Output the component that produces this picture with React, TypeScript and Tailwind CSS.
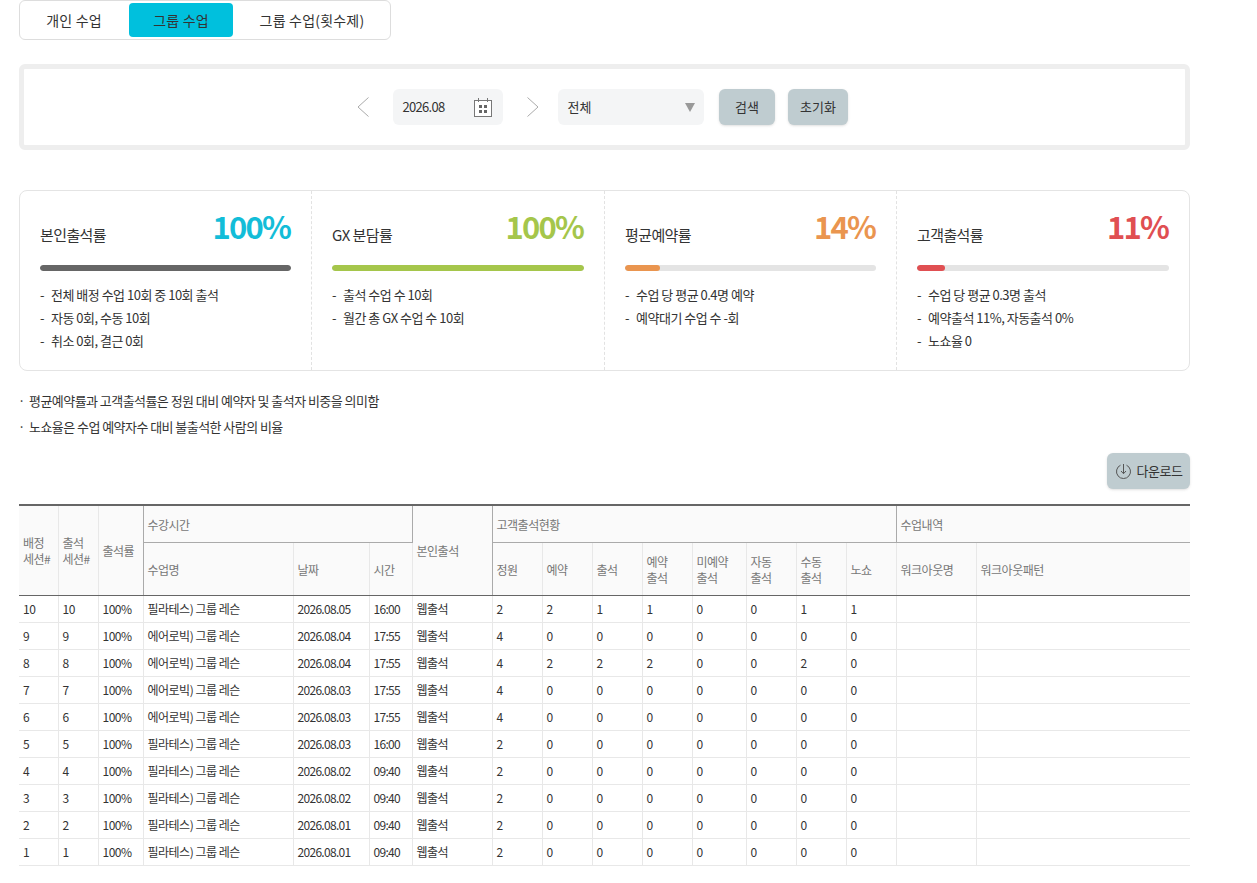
type Stat = {
    title: string,
    value: string,
    percent: number,
    textClass: string,
    barClass: string,
    lines: string[],
}

const stats: Stat[] = [
    { title: "본인출석률", value: "100%", percent: 100, textClass: "text-[#13bdd8]", barClass: "bg-[#666666]", lines: ["전체 배정 수업 10회 중 10회 출석", "자동 0회, 수동 10회", "취소 0회, 결근 0회"] },
    { title: "GX 분담률", value: "100%", percent: 100, textClass: "text-[#a5c64b]", barClass: "bg-[#a5c64b]", lines: ["출석 수업 수 10회", "월간 총 GX 수업 수 10회"] },
    { title: "평균예약률", value: "14%", percent: 14, textClass: "text-[#ea954f]", barClass: "bg-[#ea954f]", lines: ["수업 당 평균 0.4명 예약", "예약대기 수업 수 -회"] },
    { title: "고객출석률", value: "11%", percent: 11, textClass: "text-[#e04f52]", barClass: "bg-[#e04f52]", lines: ["수업 당 평균 0.3명 출석", "예약출석 11%, 자동출석 0%", "노쇼율 0"] },
];

const PILATES = "필라테스) 그룹 레슨";
const AEROBIC = "에어로빅) 그룹 레슨";

const rows = [
    { n: 10, name: PILATES, date: "2026.08.05", time: "16:00", c: [2, 2, 1, 1, 0, 0, 1, 1] },
    { n: 9, name: AEROBIC, date: "2026.08.04", time: "17:55", c: [4, 0, 0, 0, 0, 0, 0, 0] },
    { n: 8, name: AEROBIC, date: "2026.08.04", time: "17:55", c: [4, 2, 2, 2, 0, 0, 2, 0] },
    { n: 7, name: AEROBIC, date: "2026.08.03", time: "17:55", c: [4, 0, 0, 0, 0, 0, 0, 0] },
    { n: 6, name: AEROBIC, date: "2026.08.03", time: "17:55", c: [4, 0, 0, 0, 0, 0, 0, 0] },
    { n: 5, name: PILATES, date: "2026.08.03", time: "16:00", c: [2, 0, 0, 0, 0, 0, 0, 0] },
    { n: 4, name: PILATES, date: "2026.08.02", time: "09:40", c: [2, 0, 0, 0, 0, 0, 0, 0] },
    { n: 3, name: PILATES, date: "2026.08.02", time: "09:40", c: [2, 0, 0, 0, 0, 0, 0, 0] },
    { n: 2, name: PILATES, date: "2026.08.01", time: "09:40", c: [2, 0, 0, 0, 0, 0, 0, 0] },
    { n: 1, name: PILATES, date: "2026.08.01", time: "09:40", c: [2, 0, 0, 0, 0, 0, 0, 0] },
];

const colWidths = [39, 40, 45, 150, 76, 43, 80, 50, 50, 50, 50, 54, 50, 50, 50, 80, 214];

const thMain = "border-r border-b border-[#aaaaaa] px-1 pt-[2px] text-left text-[12px] font-normal leading-[16px] tracking-[-0.5px] text-[#777777] align-middle";
const thSub = "border-r border-b border-r-[#e8e8e8] border-b-[#666666] px-1 pt-[2px] text-left text-[12px] font-normal leading-[16px] tracking-[-0.5px] text-[#777777] align-middle";
const td = "h-[27px] border-r border-b border-[#e8e8e8] pl-1 text-[12px] leading-[16px] text-[#333333] whitespace-nowrap tracking-[-0.5px] align-middle";

function CalendarIcon(): JSX.Element {
    return (
        <svg width="18" height="19" viewBox="0 0 18 19" fill="none">
            <rect x="0.5" y="2.5" width="17" height="16" fill="#fff" stroke="#777" />
            <path d="M4.5 0v4M13.5 0v4" stroke="#777" />
            <path d="M5 7h3v3H5zM10 7h3v3h-3zM5 12h3v3H5zM10 12h3v3h-3z" fill="#666" />
        </svg>
    );
}

function Arrow({ flip }: { flip?: boolean }): JSX.Element {
    return (
        <svg width="12" height="20" viewBox="0 0 12 20" fill="none" stroke="#aaaaaa" strokeWidth="1" className={flip ? "rotate-180" : ""}>
            <path d="M11.5 0.5L1 10l10.5 9.5" />
        </svg>
    );
}

function StatCard({ stat }: { stat: Stat }): JSX.Element {
    return (
        <div className="px-[20px] border-r border-dashed border-[#e2e2e2] last:border-r-0">
            <div className="flex items-end justify-between h-[64px]">
                <span className="text-[15px] leading-[22px] mb-[9px] tracking-[-0.6px] text-[#333333]">{stat.title}</span>
                <span className={`text-[31px] font-bold leading-[44px] mb-[7px] pr-[1px] tracking-[-1.8px] ${stat.textClass}`}>{stat.value}</span>
            </div>
            <div className="mt-[10px] h-[6px] rounded-full bg-[#e4e4e4] overflow-hidden">
                <div className={`h-full rounded-full ${stat.barClass}`} style={{ width: `${stat.percent}%` }} />
            </div>
            <ul className="mt-[12px]">
                {stat.lines.map((line) => (
                    <li key={line} className="flex h-[23px] items-center text-[13px] tracking-[-0.5px] text-[#333333]">
                        <span className="w-[11px]">-</span>
                        {line}
                    </li>
                ))}
            </ul>
        </div>
    );
}

export default function App(): JSX.Element {
    return (
        <div className="w-[1257px] h-[883px] overflow-hidden bg-white pl-[19px] font-['Noto_Sans_CJK_KR','Noto_Sans',sans-serif]">
            <div className="w-[1171px]">
                <div className="flex w-[372px] h-[40px] items-center rounded-[6px] border border-[#dddddd] px-[2px] text-[14px] tracking-[0.2px] text-[#333333]">
                    <button className="w-[107px] h-[34px] pr-[3px]">개인 수업</button>
                    <button className="w-[104px] h-[34px] rounded-[4px] bg-[#00c0dd]">그룹 수업</button>
                    <button className="flex-1 h-[34px] pl-[3px]">그룹 수업(횟수제)</button>
                </div>

                <div className="mt-[24px] flex h-[86px] items-center justify-center rounded-[6px] border-[5px] border-[#eeeeee] text-[13px] text-[#333333] pr-[5px]">
                    <Arrow />
                    <div className="ml-[24px] flex w-[110px] h-[36px] items-center justify-between rounded-[6px] bg-[#f4f5f6] pl-[10px] pr-[11px] tracking-[-0.7px]">
                        <span>2026.08</span>
                        <CalendarIcon />
                    </div>
                    <div className="ml-[24px]"><Arrow flip /></div>
                    <div className="ml-[19px] flex w-[146px] h-[36px] items-center justify-between rounded-[6px] bg-[#f4f5f6] pl-[10px] pr-[9px]">
                        <span>전체</span>
                        <span className="w-0 h-0 border-x-[5px] border-t-[9px] border-x-transparent border-t-[#999999]" />
                    </div>
                    <button className="ml-[15px] w-[56px] h-[36px] pl-[1px] rounded-[6px] bg-[#bfccd0] shadow-sm">검색</button>
                    <button className="ml-[13px] w-[60px] h-[36px] pl-[1px] rounded-[6px] bg-[#bfccd0] shadow-sm">초기화</button>
                </div>

                <div className="mt-[40px] grid grid-cols-[292px_293px_292px_1fr] h-[181px] rounded-[8px] border border-[#e4e4e4]">
                    {stats.map((stat) => (
                        <StatCard key={stat.title} stat={stat} />
                    ))}
                </div>

                <div className="mt-[17px] text-[13px] tracking-[-0.55px] text-[#333333]">
                    <p className="flex h-[26px] items-center"><span className="w-[11px] -ml-[1px]">·</span>평균예약률과 고객출석률은 정원 대비 예약자 및 출석자 비중을 의미함</p>
                    <p className="flex h-[26px] items-center"><span className="w-[11px] -ml-[1px]">·</span>노쇼율은 수업 예약자수 대비 불출석한 사람의 비율</p>
                </div>

                <div className="mt-[13px] flex justify-end">
                    <button className="flex w-[83px] h-[36px] items-center justify-center gap-[5px] rounded-[6px] bg-[#bfccd0] shadow-sm text-[13px] text-[#333333] tracking-[-0.5px]">
                        <svg width="17" height="17" viewBox="0 0 17 17" fill="none" stroke="#555" strokeWidth="1">
                            <path d="M5.5 2.2a7 7 0 1 0 6 0" />
                            <path d="M8.5 1v9.5M6 8l2.5 2.7L11 8" />
                        </svg>
                        다운로드
                    </button>
                </div>

                <table className="mt-[15px] w-[1171px] table-fixed border-collapse border-t-2 border-t-[#666666] bg-white">
                    <colgroup>
                        {colWidths.map((w, i) => (
                            <col key={i} style={{ width: w }} />
                        ))}
                    </colgroup>
                    <thead className="bg-[#fafafa]">
                        <tr className="h-[37px]">
                            <th rowSpan={2} className={`${thMain} border-r-[#e8e8e8] border-b-[#666666]`}>배정<br />세션#</th>
                            <th rowSpan={2} className={`${thMain} border-r-[#e8e8e8] border-b-[#666666]`}>출석<br />세션#</th>
                            <th rowSpan={2} className={`${thMain} border-b-[#666666]`}>출석률</th>
                            <th colSpan={3} className={thMain}>수강시간</th>
                            <th rowSpan={2} className={`${thMain} border-b-[#666666]`}>본인출석</th>
                            <th colSpan={8} className={thMain}>고객출석현황</th>
                            <th colSpan={2} className={`${thMain} border-r-0`}>수업내역</th>
                        </tr>
                        <tr className="h-[53px]">
                            <th className={thSub}>수업명</th>
                            <th className={thSub}>날짜</th>
                            <th className={`${thSub} border-r-[#aaaaaa]`}>시간</th>
                            <th className={thSub}>정원</th>
                            <th className={thSub}>예약</th>
                            <th className={thSub}>출석</th>
                            <th className={thSub}>예약<br />출석</th>
                            <th className={thSub}>미예약<br />출석</th>
                            <th className={thSub}>자동<br />출석</th>
                            <th className={thSub}>수동<br />출석</th>
                            <th className={`${thSub} border-r-[#aaaaaa]`}>노쇼</th>
                            <th className={thSub}>워크아웃명</th>
                            <th className={`${thSub} border-r-0`}>워크아웃패턴</th>
                        </tr>
                    </thead>
                    <tbody>
                        {rows.map((row) => (
                            <tr key={row.n}>
                                <td className={td}>{row.n}</td>
                                <td className={td}>{row.n}</td>
                                <td className={td}>100%</td>
                                <td className={td}>{row.name}</td>
                                <td className={`${td} tracking-[-0.7px]`}>{row.date}</td>
                                <td className={`${td} tracking-[-0.7px]`}>{row.time}</td>
                                <td className={td}>웹출석</td>
                                {row.c.map((v, i) => (
                                    <td key={i} className={td}>{v}</td>
                                ))}
                                <td className={td}></td>
                                <td className={`${td} border-r-0`}></td>
                            </tr>
                        ))}
                    </tbody>
                </table>
            </div>
        </div>
    );
}
